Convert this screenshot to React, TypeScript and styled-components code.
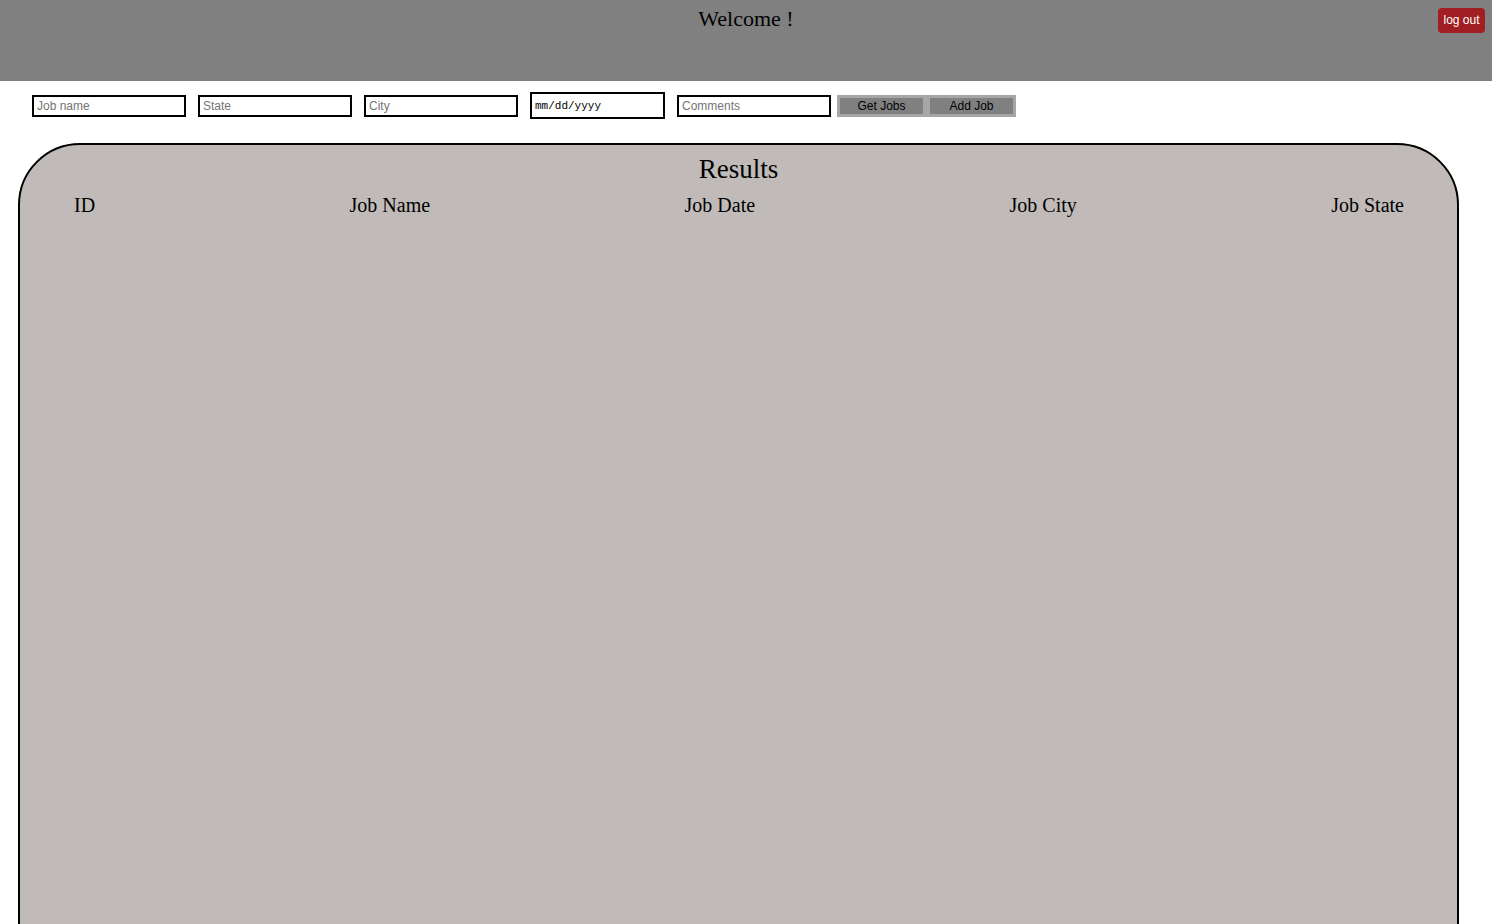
import React from "react";
import styled, { createGlobalStyle } from "styled-components";

const Global = createGlobalStyle`
  html, body { margin: 0; padding: 0; background: #fff; }
  body { font-family: "Liberation Serif", "Times New Roman", serif; overflow: hidden; height: 924px; }
`;

const Header = styled.header`
  position: relative;
  height: 81px;
  background: #808080;
  display: flex;
  justify-content: center;
  align-items: flex-start;
`;

const Welcome = styled.h1`
  margin: 5px 0 0;
  font-size: 22px;
  font-weight: normal;
  color: #000;
  line-height: 28px;
`;

const LogOut = styled.button`
  position: absolute;
  top: 8px;
  right: 7px;
  width: 47px;
  height: 25px;
  padding: 0 0 2px;
  border: none;
  border-radius: 4px;
  background: #a11f22;
  color: #fff;
  font-family: "Liberation Sans", Arial, sans-serif;
  font-size: 12px;
`;

const Toolbar = styled.div`
  display: flex;
  align-items: center;
  gap: 12px;
  padding: 9px 0 0 32px;
  height: 40px;
  box-sizing: border-box;
`;

const Field = styled.input`
  box-sizing: border-box;
  width: 154px;
  height: 22px;
  border: 2px solid #000;
  padding: 0 3px;
  font-family: "Liberation Sans", Arial, sans-serif;
  font-size: 12px;
  color: #000;
  background: #fff;
  outline: none;
  &::placeholder { color: #757575; }
`;

const DateField = styled.div`
  box-sizing: border-box;
  width: 135px;
  height: 27px;
  border: 2px solid #000;
  padding: 0 3px;
  display: flex;
  align-items: center;
  font-family: "Liberation Mono", "DejaVu Sans Mono", monospace;
  font-size: 11px;
  color: #000;
  background: #fff;
`;

const ButtonGroup = styled.div`
  display: flex;
  gap: 7px;
  margin-left: -6px;
  padding: 3px;
  background: #a6a6a6;
`;

const ActionButton = styled.button`
  width: 83px;
  height: 16px;
  border: none;
  padding: 0;
  background: #808080;
  color: #000;
  font-family: "Liberation Sans", Arial, sans-serif;
  font-size: 12px;
  line-height: 16px;
`;

const Panel = styled.section`
  margin: 22px 0 0 18px;
  width: 1441px;
  height: 900px;
  box-sizing: border-box;
  border: 2px solid #000;
  border-radius: 62px;
  background: #c0bbb9;
`;

const PanelTitle = styled.h2`
  margin: 8px 0 0;
  text-align: center;
  font-size: 27px;
  font-weight: normal;
  line-height: 32px;
  color: #000;
`;

const ColumnRow = styled.div`
  display: flex;
  justify-content: space-between;
  padding: 0 53px 0 54px;
  margin-top: 8px;
`;

const ColumnHead = styled.span`
  font-size: 20px;
  line-height: 24px;
  color: #000;
`;

export default function App() {
  return (
    <>
      <Global />
      <Header>
        <Welcome>Welcome !</Welcome>
        <LogOut>log out</LogOut>
      </Header>
      <Toolbar>
        <Field placeholder="Job name" />
        <Field placeholder="State" />
        <Field placeholder="City" />
        <DateField>mm/dd/yyyy</DateField>
        <Field placeholder="Comments" />
        <ButtonGroup>
          <ActionButton>Get Jobs</ActionButton>
          <ActionButton>Add Job</ActionButton>
        </ButtonGroup>
      </Toolbar>
      <Panel>
        <PanelTitle>Results</PanelTitle>
        <ColumnRow>
          <ColumnHead>ID</ColumnHead>
          <ColumnHead>Job Name</ColumnHead>
          <ColumnHead>Job Date</ColumnHead>
          <ColumnHead>Job City</ColumnHead>
          <ColumnHead>Job State</ColumnHead>
        </ColumnRow>
      </Panel>
    </>
  );
}
